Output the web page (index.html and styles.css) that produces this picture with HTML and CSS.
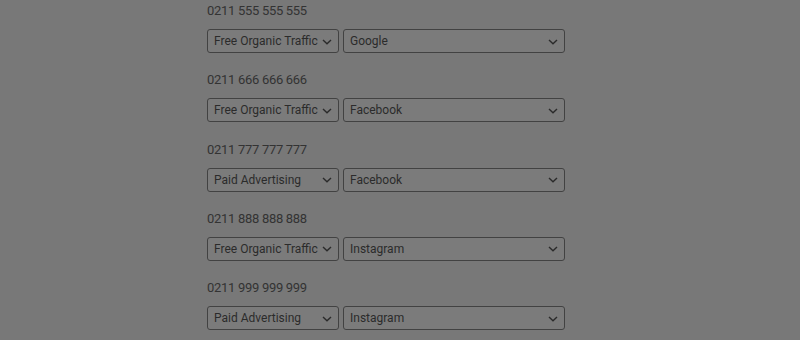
FILE: index.html
```html
<!DOCTYPE html>
<html lang="en">
<head>
<meta charset="utf-8">
<title>Phone sources</title>
<link rel="stylesheet" href="styles.css">
</head>
<body>
<div class="list">
  <div class="item">
    <div class="phone">0211 555 555 555</div>
    <div class="row">
      <div class="select narrow"><span class="val">Free Organic Traffic</span><svg class="chev" width="10" height="6" viewBox="0 0 10 6"><path d="M1 1 L5 4.8 L9 1" fill="none" stroke="#2b2b2b" stroke-width="1.4"/></svg></div>
      <div class="select wide"><span class="val">Google</span><svg class="chev" width="10" height="6" viewBox="0 0 10 6"><path d="M1 1 L5 4.8 L9 1" fill="none" stroke="#2b2b2b" stroke-width="1.4"/></svg></div>
    </div>
  </div>
  <div class="item">
    <div class="phone">0211 666 666 666</div>
    <div class="row">
      <div class="select narrow"><span class="val">Free Organic Traffic</span><svg class="chev" width="10" height="6" viewBox="0 0 10 6"><path d="M1 1 L5 4.8 L9 1" fill="none" stroke="#2b2b2b" stroke-width="1.4"/></svg></div>
      <div class="select wide"><span class="val">Facebook</span><svg class="chev" width="10" height="6" viewBox="0 0 10 6"><path d="M1 1 L5 4.8 L9 1" fill="none" stroke="#2b2b2b" stroke-width="1.4"/></svg></div>
    </div>
  </div>
  <div class="item">
    <div class="phone">0211 777 777 777</div>
    <div class="row">
      <div class="select narrow"><span class="val">Paid Advertising</span><svg class="chev" width="10" height="6" viewBox="0 0 10 6"><path d="M1 1 L5 4.8 L9 1" fill="none" stroke="#2b2b2b" stroke-width="1.4"/></svg></div>
      <div class="select wide"><span class="val">Facebook</span><svg class="chev" width="10" height="6" viewBox="0 0 10 6"><path d="M1 1 L5 4.8 L9 1" fill="none" stroke="#2b2b2b" stroke-width="1.4"/></svg></div>
    </div>
  </div>
  <div class="item">
    <div class="phone">0211 888 888 888</div>
    <div class="row">
      <div class="select narrow"><span class="val">Free Organic Traffic</span><svg class="chev" width="10" height="6" viewBox="0 0 10 6"><path d="M1 1 L5 4.8 L9 1" fill="none" stroke="#2b2b2b" stroke-width="1.4"/></svg></div>
      <div class="select wide"><span class="val">Instagram</span><svg class="chev" width="10" height="6" viewBox="0 0 10 6"><path d="M1 1 L5 4.8 L9 1" fill="none" stroke="#2b2b2b" stroke-width="1.4"/></svg></div>
    </div>
  </div>
  <div class="item">
    <div class="phone">0211 999 999 999</div>
    <div class="row">
      <div class="select narrow"><span class="val">Paid Advertising</span><svg class="chev" width="10" height="6" viewBox="0 0 10 6"><path d="M1 1 L5 4.8 L9 1" fill="none" stroke="#2b2b2b" stroke-width="1.4"/></svg></div>
      <div class="select wide"><span class="val">Instagram</span><svg class="chev" width="10" height="6" viewBox="0 0 10 6"><path d="M1 1 L5 4.8 L9 1" fill="none" stroke="#2b2b2b" stroke-width="1.4"/></svg></div>
    </div>
  </div>
</div>
</body>
</html>
```

FILE: styles.css
```css
html, body {
  margin: 0;
  padding: 0;
  background: #787878;
}
body {
  font-family: Roboto, "Liberation Sans", sans-serif;
  color: #2e2e2e;
  height: 340px;
  overflow: hidden;
}
.list {
  display: flex;
  flex-direction: column;
  gap: 19.25px;
  padding: 3px 0 0 207px;
}
.item {
  display: flex;
  flex-direction: column;
  gap: 10px;
}
.phone {
  font-size: 13px;
  letter-spacing: -0.3px;
  line-height: 16px;
  height: 16px;
  color: #333333;
}
.row {
  display: flex;
  gap: 4px;
}
.select {
  box-sizing: border-box;
  height: 24px;
  border: 1px solid #424242;
  border-radius: 3px;
  background: #7b7b7b;
  display: flex;
  align-items: center;
  padding: 0 6px 0 6px;
  font-size: 12px;
  color: #2b2b2b;
  gap: 4px;
}
.narrow { width: 132px; }
.wide { width: 222px; }
.val {
  flex: 1;
  white-space: nowrap;
  overflow: hidden;
  line-height: 22px;
}
.chev {
  flex: none;
  margin-top: 1px;
}
```
